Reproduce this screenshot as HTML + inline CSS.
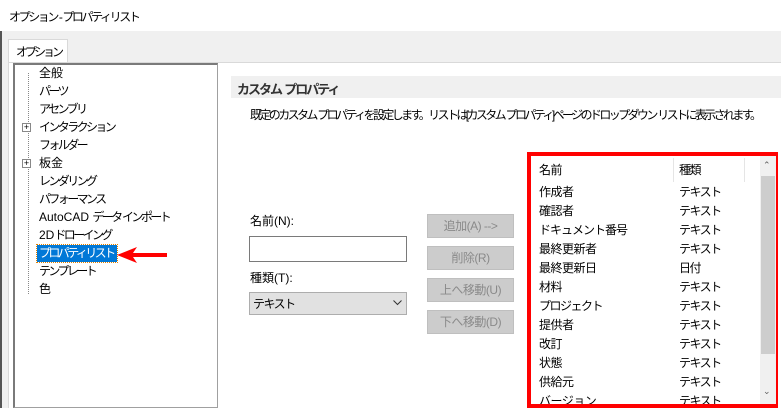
<!DOCTYPE html><html><head><meta charset="utf-8"><style>
*{margin:0;padding:0;box-sizing:border-box}
body{width:781px;height:408px;overflow:hidden;background:#f0f0f0;font-family:"Liberation Sans","Noto Sans CJK JP",sans-serif;font-size:12px;color:#000;position:relative}
.a{position:absolute;white-space:nowrap}
.ti{line-height:18px;letter-spacing:-2.6px}
.ti b{font-weight:normal;letter-spacing:0}
.btn{position:absolute;left:427px;width:87px;height:24px;background:#ccc;border:1px solid #bfbfbf;color:#8a8a8a;text-align:center;line-height:22px;letter-spacing:-0.5px}
.r{position:absolute;left:539px;line-height:19px;letter-spacing:-0.5px}
.k{position:absolute;left:679px;line-height:19px;letter-spacing:-1.5px}
</style></head><body>
<div class="a" style="left:0;top:0;width:781px;height:31px;background:#fff"></div>
<div class="a" style="left:9px;top:8px;letter-spacing:-2.4px">オプション&nbsp;&nbsp;-&nbsp;&nbsp;プロパティリスト</div>
<div class="a" style="left:0;top:31px;width:2px;height:377px;background:#555"></div>
<div class="a" style="left:8px;top:39px;width:60px;height:24px;background:#fff;border:1px solid #d9d9d9;border-bottom:none"></div>
<div class="a" style="left:16px;top:43px;letter-spacing:-3px">オプション</div>
<div class="a" style="left:8px;top:62px;width:773px;height:346px;background:#fff;border-top:1px solid #d9d9d9;border-left:1px solid #d9d9d9"></div>
<div class="a" style="left:13px;top:63px;width:205px;height:345px;border:1px solid #a0a0a0;border-top:2px solid #7a7a7a;border-left:2px solid #7a7a7a;background:#fff"></div>
<div class="a" style="left:28px;top:73px;height:221px;border-left:1px dotted #888"></div>
<div class="a" style="left:22px;top:123px;width:9px;height:9px;border:1px solid #888;background:#fff;font-size:9px;line-height:7px;text-align:center">+</div>
<div class="a" style="left:22px;top:159px;width:9px;height:9px;border:1px solid #888;background:#fff;font-size:9px;line-height:7px;text-align:center">+</div>
<div class="a ti" style="left:39px;top:64px;letter-spacing:0">全般</div>
<div class="a ti" style="left:39px;top:82px">パーツ</div>
<div class="a ti" style="left:39px;top:100px">アセンブリ</div>
<div class="a ti" style="left:39px;top:118px">インタラクション</div>
<div class="a ti" style="left:39px;top:136px">フォルダー</div>
<div class="a ti" style="left:39px;top:154px;letter-spacing:0">板金</div>
<div class="a ti" style="left:39px;top:172px">レンダリング</div>
<div class="a ti" style="left:39px;top:190px">パフォーマンス</div>
<div class="a ti" style="left:39px;top:208px"><b>AutoCAD </b>データ&nbsp;&nbsp;インポート</div>
<div class="a ti" style="left:39px;top:226px"><b>2D</b>ドローイング</div>
<div class="a ti" style="left:37px;top:245px;background:#0078d7;color:#fff;padding:0 4px 0 2px;line-height:17px;outline:1px dotted #e08000">プロパティリスト</div>
<div class="a ti" style="left:39px;top:262px">テンプレート</div>
<div class="a ti" style="left:39px;top:280px;letter-spacing:0">色</div>
<svg class="a" style="left:115px;top:245px" width="55" height="20"><path d="M2 10 L22 2 L18 8 L52 8 L52 12 L18 12 L22 18 Z" fill="#f00"/></svg>
<div class="a" style="left:231px;top:76px;width:550px;height:22px;background:#f0f0f0"></div>
<div class="a" style="left:237px;top:79px;font-size:13px;font-weight:bold;color:#333;letter-spacing:-2px">カスタム&nbsp;&nbsp;プロパティ</div>
<div class="a" style="left:250px;top:106px;letter-spacing:-2.6px">既定のカスタム&nbsp;&nbsp;プロパティを設定します。リストは[カスタム&nbsp;&nbsp;プロパティ]ページのドロップダウン&nbsp;&nbsp;リストに表示されます。</div>
<div class="a" style="left:250px;top:212px">名前(N):</div>
<div class="a" style="left:249px;top:236px;width:158px;height:26px;border:1px solid #7a7a7a;background:#fff"></div>
<div class="a" style="left:250px;top:269px">種類(T):</div>
<div class="a" style="left:249px;top:292px;width:158px;height:23px;border:1px solid #adadad;background:#e1e1e1"></div>
<div class="a" style="left:253px;top:295px;letter-spacing:-1.5px">テキスト</div>
<svg class="a" style="left:393px;top:300px" width="9" height="6"><path d="M0.5 0.5 L4.5 4.5 L8.5 0.5" stroke="#333" fill="none"/></svg>
<div class="btn" style="top:214px">追加(A) --&gt;</div>
<div class="btn" style="top:246px">削除(R)</div>
<div class="btn" style="top:278px">上へ移動(U)</div>
<div class="btn" style="top:310px">下へ移動(D)</div>
<div class="a" style="left:527px;top:152px;width:251px;height:256px;border:4px solid #f00;background:#fff"></div>
<div class="a" style="left:673px;top:158px;width:1px;height:24px;background:#e5e5e5"></div>
<div class="a" style="left:744px;top:158px;width:1px;height:24px;background:#e5e5e5"></div>
<div class="a" style="left:760px;top:156px;width:16px;height:248px;background:#f0f0f0"></div>
<div class="a" style="left:761px;top:176px;width:14px;height:178px;background:#cdcdcd"></div>
<div class="a" style="left:763px;top:160px;font-size:9px;color:#606060">⌃</div>
<div class="a" style="left:763px;top:386px;font-size:9px;color:#606060">⌄</div>
<div class="r" style="top:161px">名前</div><div class="k" style="top:161px">種類</div>
<div class="r" style="top:183px">作成者</div><div class="k" style="top:183px">テキスト</div>
<div class="r" style="top:202px">確認者</div><div class="k" style="top:202px">テキスト</div>
<div class="r" style="top:221px;letter-spacing:-1px">ドキュメント番号</div><div class="k" style="top:221px">テキスト</div>
<div class="r" style="top:240px">最終更新者</div><div class="k" style="top:240px">テキスト</div>
<div class="r" style="top:259px">最終更新日</div><div class="k" style="top:259px">日付</div>
<div class="r" style="top:278px">材料</div><div class="k" style="top:278px">テキスト</div>
<div class="r" style="top:297px;letter-spacing:-1.5px">プロジェクト</div><div class="k" style="top:297px">テキスト</div>
<div class="r" style="top:316px">提供者</div><div class="k" style="top:316px">テキスト</div>
<div class="r" style="top:335px">改訂</div><div class="k" style="top:335px">テキスト</div>
<div class="r" style="top:354px">状態</div><div class="k" style="top:354px">テキスト</div>
<div class="r" style="top:373px">供給元</div><div class="k" style="top:373px">テキスト</div>
<div class="r" style="top:392px;height:12px;overflow:hidden">バージョン</div><div class="k" style="top:392px;height:12px;overflow:hidden">テキスト</div>
</body></html>
